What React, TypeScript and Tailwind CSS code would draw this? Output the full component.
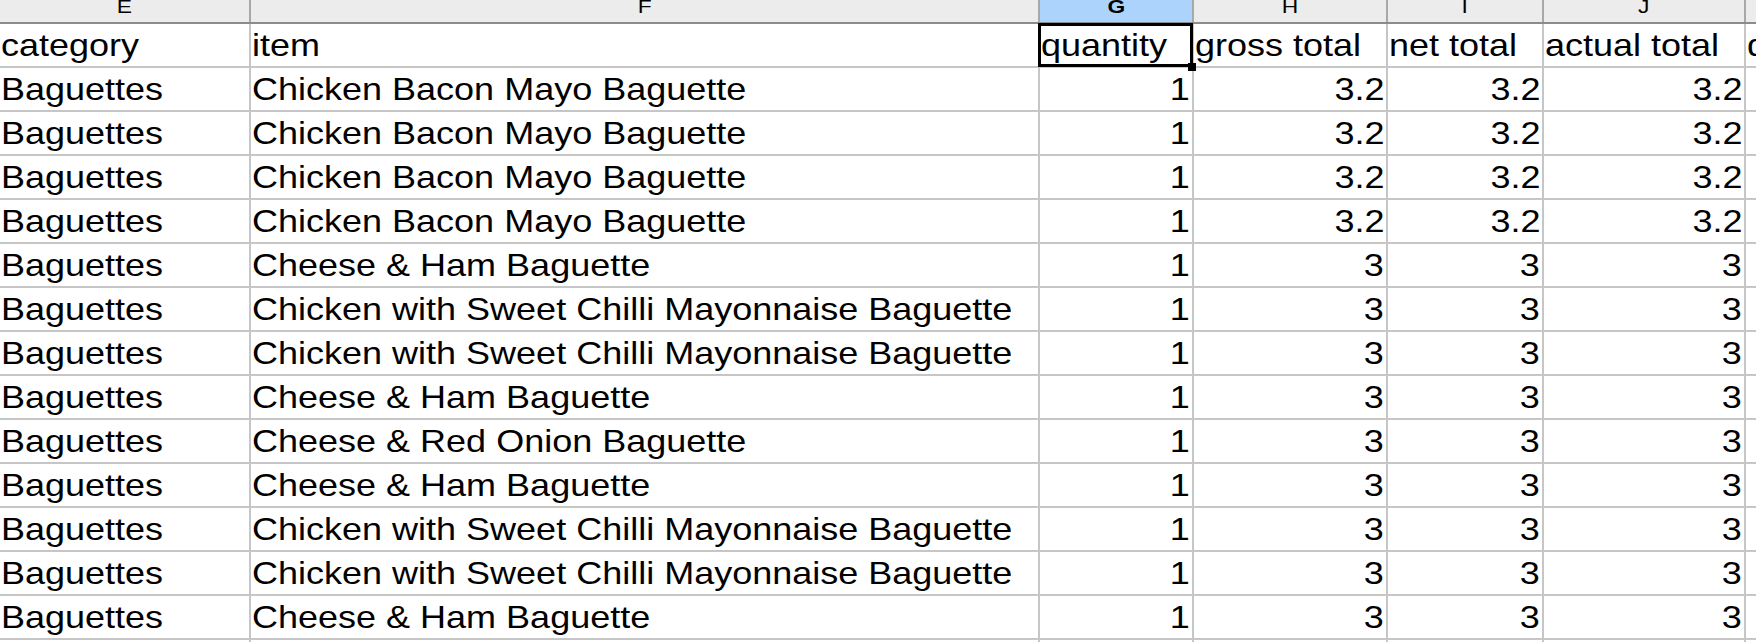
import React from "react";

type Row = { category: string; item: string; qty: string; gross: string; net: string; actual: string; extra?: string };

const grid = "grid grid-cols-[251px_789px_154px_194px_156px_202px_200px]";

const letters = ["E", "F", "G", "H", "I", "J", "K"];

const rows: Row[] = [
    { category: "Baguettes", item: "Chicken Bacon Mayo Baguette", qty: "1", gross: "3.2", net: "3.2", actual: "3.2" },
    { category: "Baguettes", item: "Chicken Bacon Mayo Baguette", qty: "1", gross: "3.2", net: "3.2", actual: "3.2" },
    { category: "Baguettes", item: "Chicken Bacon Mayo Baguette", qty: "1", gross: "3.2", net: "3.2", actual: "3.2" },
    { category: "Baguettes", item: "Chicken Bacon Mayo Baguette", qty: "1", gross: "3.2", net: "3.2", actual: "3.2" },
    { category: "Baguettes", item: "Cheese & Ham Baguette", qty: "1", gross: "3", net: "3", actual: "3" },
    { category: "Baguettes", item: "Chicken with Sweet Chilli Mayonnaise Baguette", qty: "1", gross: "3", net: "3", actual: "3" },
    { category: "Baguettes", item: "Chicken with Sweet Chilli Mayonnaise Baguette", qty: "1", gross: "3", net: "3", actual: "3" },
    { category: "Baguettes", item: "Cheese & Ham Baguette", qty: "1", gross: "3", net: "3", actual: "3" },
    { category: "Baguettes", item: "Cheese & Red Onion Baguette", qty: "1", gross: "3", net: "3", actual: "3" },
    { category: "Baguettes", item: "Cheese & Ham Baguette", qty: "1", gross: "3", net: "3", actual: "3" },
    { category: "Baguettes", item: "Chicken with Sweet Chilli Mayonnaise Baguette", qty: "1", gross: "3", net: "3", actual: "3" },
    { category: "Baguettes", item: "Chicken with Sweet Chilli Mayonnaise Baguette", qty: "1", gross: "3", net: "3", actual: "3" },
    { category: "Baguettes", item: "Cheese & Ham Baguette", qty: "1", gross: "3", net: "3", actual: "3" },
    { category: "", item: "", qty: "", gross: "", net: "", actual: "" },
];

function Cell({ children, right, selected }: { children?: React.ReactNode; right?: boolean; selected?: boolean }) {
    return (
        <div
            className={
                "relative h-[44px] border-r-2 border-b-2 border-[#c6c6c6] whitespace-nowrap overflow-visible leading-[42px] " +
                (right ? "text-right pr-[2px]" : "text-left pl-[1px]") +
                (selected ? " z-10" : "")
            }
        >
            <span className={"inline-block scale-x-[1.125] " + (right ? "origin-right" : "origin-left")}>{children}</span>
            {selected ? (
                <>
                    <div className="absolute -left-[2px] -top-[1px] w-[155px] h-[44px] border-[3px] border-black" />
                    <div className="absolute left-[148px] top-[39px] w-[8px] h-[8px] bg-black" />
                </>
            ) : null}
        </div>
    );
}

export default function App() {
    return (
        <div className="w-[1756px] h-[642px] overflow-hidden bg-white text-black font-['Liberation_Sans',Arial,sans-serif] text-[32px]">
            <div className={grid + " h-[24px] border-b-2 border-[#8c8c8c] overflow-hidden"}>
                {letters.map((l) => (
                    <div
                        key={l}
                        className={
                            "h-[22px] border-r-2 border-[#a8a8a8] text-center text-[19px] leading-[14px] overflow-hidden " +
                            (l === "G" ? "bg-[#abd3fb] font-bold" : "bg-[#ececec]")
                        }
                    >
                        <span className="inline-block scale-x-[1.2]">{l}</span>
                    </div>
                ))}
            </div>

            <div className={grid}>
                <Cell>category</Cell>
                <Cell>item</Cell>
                <Cell selected>quantity</Cell>
                <Cell>gross total</Cell>
                <Cell>net total</Cell>
                <Cell>actual total</Cell>
                <Cell>discount</Cell>
            </div>

            {rows.map((r, i) => (
                <div key={i} className={grid}>
                    <Cell>{r.category}</Cell>
                    <Cell>{r.item}</Cell>
                    <Cell right>{r.qty}</Cell>
                    <Cell right>{r.gross}</Cell>
                    <Cell right>{r.net}</Cell>
                    <Cell right>{r.actual}</Cell>
                    <Cell right>{r.extra}</Cell>
                </div>
            ))}
        </div>
    );
}
